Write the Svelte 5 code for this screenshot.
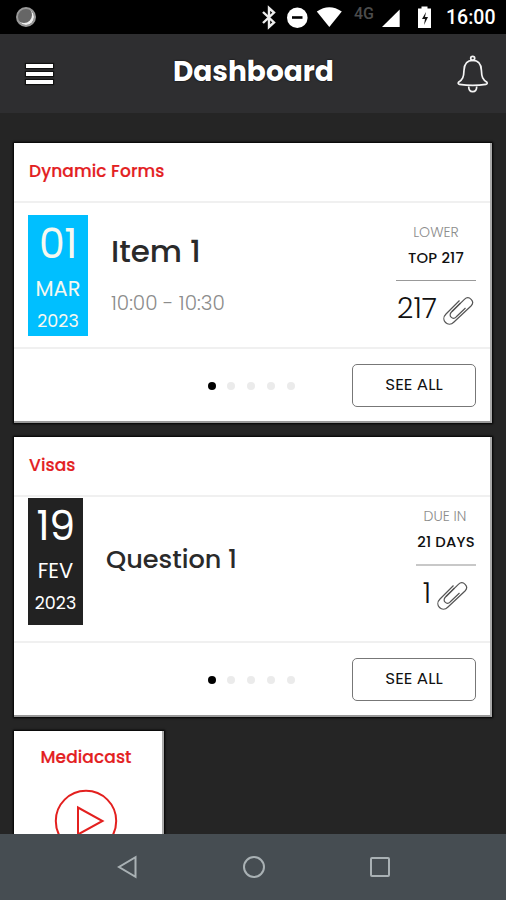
<script lang="ts">
  type Card = {
    id: string;
    title: string;
    day: string;
    month: string;
    year: string;
    name: string;
    time?: string;
    label: string;
    value: string;
    files: number;
  };

  const PAGES = 5;

  let active = 0;

  let cards: Card[] = [
    {
      id: 'forms',
      title: 'Dynamic Forms',
      day: '01',
      month: 'MAR',
      year: '2023',
      name: 'Item 1',
      time: '10:00 - 10:30',
      label: 'LOWER',
      value: 'TOP 217',
      files: 217
    },
    {
      id: 'visas',
      title: 'Visas',
      day: '19',
      month: 'FEV',
      year: '2023',
      name: 'Question 1',
      label: 'DUE IN',
      value: '21 DAYS',
      files: 1
    }
  ];
</script>

<div class="screen">
  <div class="status">
    <span class="sync"></span>
    <svg class="status-icons" width="180" height="34" viewBox="256 0 180 34">
      <path d="M263 12l11 10.500-5 4.500V8l5 4.500L263 23" fill="none" stroke="#eee" stroke-width="2.400" />
      <circle cx="297.300" cy="17.700" r="10.300" fill="#fff" />
      <path d="M292 17.500h10.500" stroke="#000" stroke-width="2.600" />
      <path d="M316.800 11.500q12.500-8.500 25 0L329.300 27z" fill="#fff" />
      <text x="354" y="18.500" font-size="16" font-weight="500" fill="#4c4c4c">4G</text>
      <path d="M399.700 9.500V27H382z" fill="#fff" />
      <path d="M418 8.500h3.500V6.500h6v2h3.500V28h-13z" fill="#fff" />
      <path d="M426 12l-4 7h3l-1 6 4-8h-3z" fill="#111" />
    </svg>
    <span class="clock">16:00</span>
  </div>

  <div class="header">
    <div class="burger"><i></i><i></i><i></i></div>
    <h1>Dashboard</h1>
    <svg class="bell" width="34" height="40" viewBox="456 53 34 40" fill="none" stroke="#f4f4f4" stroke-width="1.700">
      <circle cx="472.700" cy="57.300" r="2" />
      <path d="M472.700 59.300c-5.700 0-8.500 4-8.700 10-.2 7-1.400 9-5.500 12-.8 1 0 2 1 2.100q13.200 2 26.400 0c1-.1 1.800-1.100 1-2.100-4.100-3-5.300-5-5.500-12-.2-6-3-10-8.700-10z" />
      <path d="M468.700 85.500c0 3 1.600 5.200 4 5.200s4-2.200 4-5.200" />
    </svg>
  </div>

  <div class="content">
    {#each cards as card (card.id)}
      <div class="card {card.id}">
        <h2>{card.title}</h2>
        <div class="body">
          <div class="date">
            <span class="day">{card.day}</span>
            <span class="month">{card.month}</span>
            <span class="year">{card.year}</span>
          </div>
          <div class="info">
            <span class="name">{card.name}</span>
            {#if card.time}
              <span class="time">{card.time}</span>
            {/if}
          </div>
          <div class="meta">
            <span class="label">{card.label}</span>
            <span class="value">{card.value}</span>
            <div class="files">
              <span>{card.files}</span>
              <svg width="32" height="32" viewBox="0 0 32 32" fill="none" stroke="#555" stroke-width="1.200">
                <path d="M17.500 5.500L4 19c-6 6 2 14 8 8L29 11c4.500-4.600-2-11-6.600-6.600L9.500 17c-3.800 3.800 1.200 8.400 4.800 4.800L23.500 13" />
                <path d="M18.500 8L10 16.500" />
              </svg>
            </div>
          </div>
        </div>
        <div class="footer">
          <div class="dots">
            {#each Array(PAGES) as _, i}
              <span class="dot" class:active={i === active}></span>
            {/each}
          </div>
          <button>SEE ALL</button>
        </div>
      </div>
    {/each}

    <div class="tile">
      <h2>Mediacast</h2>
      <svg width="64" height="64" viewBox="0 0 64 64" fill="none" stroke="#e3201f" stroke-width="2">
        <circle cx="32" cy="32" r="30.200" />
        <path d="M24 18.500v27L48.500 32z" />
      </svg>
    </div>
  </div>

  <div class="nav">
    <svg width="22" height="24" viewBox="0 0 22 24"><path d="M18.500 2.200v19.600L2 12z" /></svg>
    <svg width="24" height="24" viewBox="0 0 24 24"><circle cx="12" cy="12" r="10" /></svg>
    <svg width="22" height="24" viewBox="0 0 22 24"><rect x="2" y="3" width="18" height="18" rx="1" /></svg>
  </div>
</div>

<style>
  :global(body) {
    margin: 0;
    background-color: #252525;
  }

  .screen {
    display: flex;
    flex-direction: column;
    width: 506px;
    height: 900px;
    overflow: hidden;
    background-color: #252525;
    font-family: Poppins, Inter, sans-serif;
  }

  .status {
    flex: none;
    display: flex;
    align-items: center;
    height: 34px;
    padding: 0 11px 0 16px;
    background-color: #000;
    font-family: Roboto, sans-serif;
  }

  .sync {
    box-sizing: border-box;
    width: 20px;
    height: 20px;
    border-radius: 50%;
    background-color: #666;
    border: 2px solid #999;
    box-shadow: inset -2px -2px 0 #eee;
  }

  .status-icons {
    margin-left: auto;
  }

  .clock {
    width: 49px;
    margin-left: 10px;
    padding-top: 2px;
    color: #fff;
    font-size: 19.5px;
    font-weight: 500;
    line-height: 32px;
    white-space: nowrap;
  }

  .header {
    flex: none;
    display: flex;
    align-items: center;
    height: 79px;
    padding: 0 16px 0 26px;
    background-color: #2e2e30;
  }

  .burger {
    display: flex;
    flex-direction: column;
    gap: 4px;
    width: 27px;
  }

  .burger i {
    height: 4px;
    background-color: #fff;
    box-shadow: 0 0 1px 1px #111;
  }

  h1 {
    margin: 0 0 3px 120px;
    color: #fff;
    font-size: 28px;
    font-weight: 700;
    line-height: 40px;
    text-shadow: 0 0 2px #000;
  }

  .bell {
    margin-left: auto;
  }

  .content {
    flex: 1;
    min-height: 0;
    overflow: hidden;
    padding: 30px 14px 0;
  }

  .card {
    box-sizing: border-box;
    display: flex;
    flex-direction: column;
    height: 280px;
    margin-bottom: 14px;
    background-color: #fff;
    border-right: 2px solid #aaa;
    border-bottom: 2px solid #999;
    box-shadow: 0 0 2px 1px #000;
  }

  h2 {
    margin: 0;
    color: #e3201f;
    font-size: 17px;
    font-weight: 500;
    line-height: 24px;
    letter-spacing: 0.1px;
    -webkit-text-stroke: 0.2px #e3201f;
  }

  .card h2 {
    height: 42px;
    padding: 16px 14px 0 15px;
    border-bottom: 2px solid #f0f0f0;
  }

  .body {
    display: flex;
    height: 144px;
    padding: 0 14px;
    border-bottom: 2px solid #f0f0f0;
  }

  .date {
    box-sizing: border-box;
    display: flex;
    flex-direction: column;
    align-items: center;
    width: 60px;
    height: 121px;
    margin-top: 12px;
    padding-top: 4px;
    background-color: #00bfff;
    color: #f6f8f0;
  }

  .visas .date {
    width: 55px;
    height: 127px;
    margin-top: 1px;
    padding-top: 3px;
    background-color: #222;
    color: #fff;
  }

  .day {
    font-size: 41px;
    line-height: 50px;
    letter-spacing: -0.5px;
  }

  .month {
    margin-top: 6px;
    font-size: 21px;
    line-height: 28px;
  }

  .year {
    margin-top: 3px;
    font-size: 17.5px;
    line-height: 30px;
  }

  .info {
    display: flex;
    flex-direction: column;
    margin-left: 23px;
    white-space: nowrap;
  }

  .name {
    margin-top: 28px;
    color: #2a2a2a;
    font-size: 31px;
    font-weight: 500;
    line-height: 40px;
  }

  .visas .name {
    margin-top: 42px;
    font-size: 25.6px;
  }

  .time {
    margin-top: 12px;
    color: #8c8c8c;
    font-size: 20px;
    font-weight: 300;
    line-height: 40px;
  }

  .meta {
    display: flex;
    flex-direction: column;
    align-items: center;
    width: 80px;
    margin-left: auto;
    padding-top: 19px;
    white-space: nowrap;
  }

  .visas .meta {
    width: 60px;
    padding-top: 9px;
  }

  .label {
    color: #8c8c8c;
    font-size: 14px;
    font-weight: 300;
    line-height: 20px;
  }

  .visas .label {
    margin-right: 2px;
  }

  .value {
    margin-top: 1px;
    color: #111;
    font-size: 14.8px;
    font-weight: 500;
    line-height: 30px;
    letter-spacing: 0.2px;
  }

  .files {
    display: flex;
    justify-content: center;
    width: 100%;
    gap: 6px;
    margin-top: 7px;
    padding-top: 10px;
    border-top: 1.5px solid #999;
    color: #111;
    font-size: 28.5px;
    font-weight: 300;
    line-height: 34px;
  }

  .visas .files {
    border-top: 2px solid #c8c8c8;
  }

  .files svg {
    flex: none;
    margin: 4px 1px 0 -1px;
  }

  .footer {
    display: flex;
    align-items: center;
    flex: 1;
    padding: 1px 14px 0 193.5px;
  }

  .dots {
    display: flex;
    gap: 11.8px;
  }

  .dot {
    width: 8px;
    height: 8px;
    border-radius: 50%;
    background-color: #ebebeb;
  }

  .dot.active {
    background-color: #000;
  }

  button {
    width: 124px;
    height: 43px;
    margin-left: auto;
    padding: 0 0 3px;
    background-color: #fff;
    border: 1px solid #777;
    border-radius: 5px;
    color: #111;
    font: inherit;
    font-size: 16.8px;
  }

  .tile {
    display: flex;
    flex-direction: column;
    align-items: center;
    box-sizing: border-box;
    width: 150px;
    height: 140px;
    padding: 14px 4px 0 0;
    background-color: #fff;
    border-right: 2px solid #aaa;
    box-shadow: 0 0 2px 1px #000;
  }

  .tile svg {
    margin-top: 19.5px;
  }

  .nav {
    flex: none;
    display: flex;
    justify-content: center;
    align-items: center;
    gap: 103px;
    height: 66px;
    padding-left: 2px;
    background-color: #464d52;
  }

  .nav svg {
    fill: none;
    stroke: #a9b1b4;
    stroke-width: 2;
  }
</style>
